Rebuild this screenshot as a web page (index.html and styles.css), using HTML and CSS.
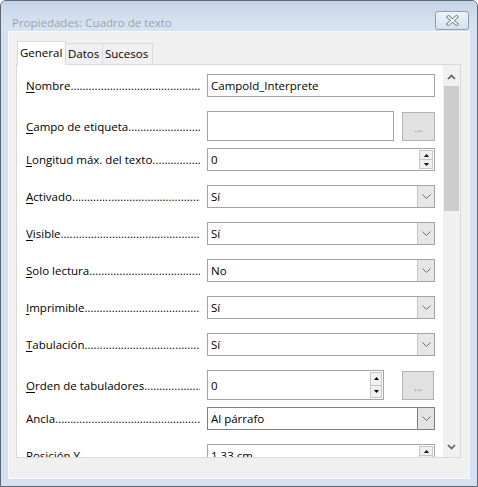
FILE: index.html
```html
<!DOCTYPE html>
<html lang="es">
<head>
<meta charset="utf-8">
<title>Propiedades: Cuadro de texto</title>
<link rel="stylesheet" href="styles.css">
</head>
<body>
<div class="window">
  <div class="titlebar">
    <span class="title">Propiedades: Cuadro de texto</span>
    <button class="close" aria-label="Cerrar">
      <svg width="13" height="11" viewBox="0 0 13 11">
        <path d="M2.5 2 L10.5 9 M10.5 2 L2.5 9" stroke="#7d8898" stroke-width="3.6" stroke-linecap="square" fill="none"/>
        <path d="M2.5 2 L10.5 9 M10.5 2 L2.5 9" stroke="#ffffff" stroke-width="1.6" stroke-linecap="square" fill="none"/>
      </svg>
    </button>
  </div>

  <div class="client">
    <div class="tabs">
      <div class="tab active w-general">General</div>
      <div class="tab w-datos">Datos</div>
      <div class="tab w-sucesos">Sucesos</div>
    </div>

    <div class="pane">
      <div class="content">
        <div class="row">
          <span class="label"><u>N</u>ombre<span class="leader">................................................................................</span></span>
          <div class="field"><span class="value">Campold_Interprete</span></div>
        </div>

        <div class="row tall">
          <span class="label"><u>C</u>ampo de etiqueta<span class="leader">................................................................................</span></span>
          <div class="field field-tall w-campo"></div>
          <button class="dots-btn">...</button>
        </div>

        <div class="row">
          <span class="label"><u>L</u>ongitud máx. del texto<span class="leader">................................................................................</span></span>
          <div class="field">
            <span class="value">0</span>
            <span class="spin">
              <span class="sbtn"><svg width="5" height="3" viewBox="0 0 5 3"><path d="M0 3 L2.5 0 L5 3 Z" fill="#000"/></svg></span>
              <span class="sbtn"><svg width="5" height="3" viewBox="0 0 5 3"><path d="M0 0 L2.5 3 L5 0 Z" fill="#000"/></svg></span>
            </span>
          </div>
        </div>

        <div class="row">
          <span class="label"><u>A</u>ctivado<span class="leader">................................................................................</span></span>
          <div class="field select">
            <span class="value">Sí</span>
            <span class="drop"><svg width="9" height="5" viewBox="0 0 9 5"><path d="M0.5 0.5 L4.5 4.5 L8.5 0.5" stroke="#6f6f6f" fill="none"/></svg></span>
          </div>
        </div>

        <div class="row">
          <span class="label"><u>V</u>isible<span class="leader">................................................................................</span></span>
          <div class="field select">
            <span class="value">Sí</span>
            <span class="drop"><svg width="9" height="5" viewBox="0 0 9 5"><path d="M0.5 0.5 L4.5 4.5 L8.5 0.5" stroke="#6f6f6f" fill="none"/></svg></span>
          </div>
        </div>

        <div class="row">
          <span class="label"><u>S</u>olo lectura<span class="leader">................................................................................</span></span>
          <div class="field select">
            <span class="value">No</span>
            <span class="drop"><svg width="9" height="5" viewBox="0 0 9 5"><path d="M0.5 0.5 L4.5 4.5 L8.5 0.5" stroke="#6f6f6f" fill="none"/></svg></span>
          </div>
        </div>

        <div class="row">
          <span class="label"><u>I</u>mprimible<span class="leader">................................................................................</span></span>
          <div class="field select">
            <span class="value">Sí</span>
            <span class="drop"><svg width="9" height="5" viewBox="0 0 9 5"><path d="M0.5 0.5 L4.5 4.5 L8.5 0.5" stroke="#6f6f6f" fill="none"/></svg></span>
          </div>
        </div>

        <div class="row">
          <span class="label"><u>T</u>abulación<span class="leader">................................................................................</span></span>
          <div class="field select">
            <span class="value">Sí</span>
            <span class="drop"><svg width="9" height="5" viewBox="0 0 9 5"><path d="M0.5 0.5 L4.5 4.5 L8.5 0.5" stroke="#6f6f6f" fill="none"/></svg></span>
          </div>
        </div>

        <div class="row tall">
          <span class="label"><u>O</u>rden de tabuladores<span class="leader">................................................................................</span></span>
          <div class="field field-tall w-orden">
            <span class="value">0</span>
            <span class="spin spin-tall">
              <span class="sbtn"><svg width="5" height="3" viewBox="0 0 5 3"><path d="M0 3 L2.5 0 L5 3 Z" fill="#000"/></svg></span>
              <span class="sbtn"><svg width="5" height="3" viewBox="0 0 5 3"><path d="M0 0 L2.5 3 L5 0 Z" fill="#000"/></svg></span>
            </span>
          </div>
          <button class="dots-btn dots-wide">...</button>
        </div>

        <div class="row">
          <span class="label">Ancla<span class="leader">................................................................................</span></span>
          <div class="field select hot">
            <span class="value">Al párrafo</span>
            <span class="drop"><svg width="9" height="5" viewBox="0 0 9 5"><path d="M0.5 0.5 L4.5 4.5 L8.5 0.5" stroke="#6f6f6f" fill="none"/></svg></span>
          </div>
        </div>

        <div class="row">
          <span class="label"><u>P</u>osición Y<span class="leader">................................................................................</span></span>
          <div class="field">
            <span class="value">1,33 cm</span>
            <span class="spin">
              <span class="sbtn"><svg width="5" height="3" viewBox="0 0 5 3"><path d="M0 3 L2.5 0 L5 3 Z" fill="#000"/></svg></span>
              <span class="sbtn"><svg width="5" height="3" viewBox="0 0 5 3"><path d="M0 0 L2.5 3 L5 0 Z" fill="#000"/></svg></span>
            </span>
          </div>
        </div>
      </div>

      <div class="scrollbar">
        <div class="sb-up"><svg width="9" height="6" viewBox="0 0 9 6"><path d="M1 5 L4.5 1.5 L8 5" stroke="#5f5f5f" stroke-width="1.6" fill="none"/></svg></div>
        <div class="sb-thumb"></div>
        <div class="sb-track"></div>
        <div class="sb-down"><svg width="9" height="6" viewBox="0 0 9 6"><path d="M1 1 L4.5 4.5 L8 1" stroke="#5f5f5f" stroke-width="1.6" fill="none"/></svg></div>
      </div>
    </div>
  </div>
</div>
</body>
</html>
```

FILE: styles.css
```css
* {
  box-sizing: border-box;
}

html,
body {
  margin: 0;
  padding: 0;
}

body {
  width: 478px;
  height: 487px;
  overflow: hidden;
  background: #ffffff;
  font-family: "Open Sans", "Noto Sans", sans-serif;
  font-size: 11.5px;
  color: #000000;
}

/* window frame */
.window {
  width: 478px;
  height: 487px;
  border: 1px solid #5d6672;
  border-radius: 6px 6px 0 0;
  background: #d4e1f0;
  display: flex;
  flex-direction: column;
  overflow: hidden;
}

.titlebar {
  height: 30px;
  flex: none;
  display: flex;
  justify-content: space-between;
  align-items: flex-start;
  padding: 0 8px 0 11px;
  background: linear-gradient(#c3d3e7, #d3e0ef 60%, #d6e3f1);
}

.title {
  margin-top: 14px;
  line-height: 16px;
  color: #9aa2ad;
}

.close {
  margin-top: 10px;
  width: 34px;
  height: 19px;
  padding: 0;
  border: 1px solid #8e9db1;
  border-radius: 3px;
  background: linear-gradient(#eef3f9, #d6e1ee);
  display: flex;
  align-items: center;
  justify-content: center;
}

/* dialog client area */
.client {
  flex: 1;
  min-height: 0;
  margin: 0 7px 7px;
  background: #f0f0f0;
  border: 1px solid #f6f8fb;
  padding: 9px 8px 20px 7px;
  display: flex;
  flex-direction: column;
}

.tabs {
  height: 23px;
  flex: none;
  display: flex;
  align-items: flex-end;
  margin-left: 1px;
}

.tab {
  height: 21px;
  line-height: 20px;
  padding-left: 2px;
  border: 1px solid #d9d9d9;
  border-bottom: none;
  background: #f0f0f0;
  white-space: nowrap;
}

.tab + .tab {
  margin-left: -1px;
}

.tab.active {
  height: 24px;
  line-height: 22px;
  margin-bottom: -1px;
  background: #ffffff;
  position: relative;
  z-index: 1;
}

.w-general { width: 49px; }
.w-datos { width: 38px; }
.w-sucesos { width: 51px; }

.pane {
  flex: 1;
  min-height: 0;
  border: 1px solid #d9d9d9;
  background: #ffffff;
  display: flex;
  overflow: hidden;
}

.content {
  flex: 1;
  overflow: hidden;
  padding: 9px 7px 0 9px;
}

/* property rows: 37px pitch */
.row {
  display: flex;
  align-items: center;
  margin-bottom: 14px;
}

.row.tall {
  margin-bottom: 7px;
}

.label {
  width: 174px;
  flex: none;
  margin-right: 7px;
  white-space: nowrap;
  overflow: hidden;
}

.label u {
  text-decoration-thickness: 1px;
  text-underline-offset: 2px;
}

.field {
  width: 228px;
  height: 23px;
  flex: none;
  border: 1px solid #a3a3a3;
  background: #ffffff;
  display: flex;
  align-items: center;
  padding-left: 3px;
}

.field-tall {
  height: 30px;
}

.w-campo { width: 187px; }
.w-orden { width: 177px; }

.value {
  flex: 1;
  white-space: nowrap;
}

.select {
  padding-right: 0;
}

.drop {
  width: 17px;
  align-self: stretch;
  border-left: 1px solid #c4c4c4;
  background: #e6e6e6;
  display: flex;
  align-items: center;
  justify-content: center;
}

.select.hot {
  border-color: #808080;
}

.select.hot .drop {
  border-left-color: #808080;
  background: #e3e3e3;
}

.spin {
  width: 14px;
  height: 19px;
  margin-right: 1px;
  display: flex;
  flex-direction: column;
}

.spin-tall {
  width: 12px;
  height: 26px;
}

.sbtn {
  flex: 1;
  border: 1px solid #c6c6c6;
  background: #f0f0f0;
  display: flex;
  align-items: center;
  justify-content: center;
}

.sbtn + .sbtn {
  border-top: none;
}

.dots-btn {
  width: 33px;
  height: 29px;
  margin-left: 8px;
  padding: 4px 0 0;
  border: 1px solid #b3b3b3;
  background: #e1e1e1;
  color: #8a8a8a;
  font-family: "Open Sans", sans-serif;
  font-size: 10px;
  line-height: 10px;
}

.dots-wide {
  width: 32px;
  margin-left: 18px;
}

/* vertical scrollbar */
.scrollbar {
  width: 17px;
  flex: none;
  background: #f0f0f0;
  display: flex;
  flex-direction: column;
}

.sb-up {
  height: 21px;
  display: flex;
  align-items: center;
  justify-content: center;
  padding-top: 2px;
}

.sb-thumb {
  height: 125px;
  margin: 0 1px;
  background: #cdcdcd;
}

.sb-track {
  flex: 1;
}

.sb-down {
  height: 20px;
  display: flex;
  align-items: center;
  justify-content: center;
}
```
